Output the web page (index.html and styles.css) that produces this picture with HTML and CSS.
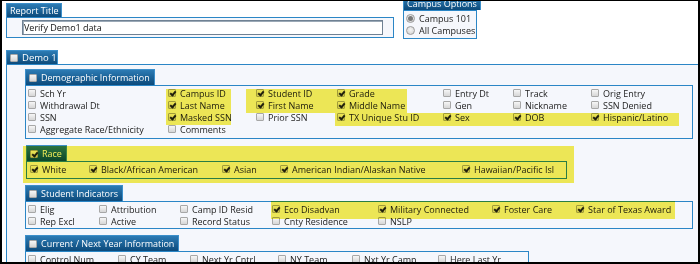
FILE: index.html
```html
<!DOCTYPE html>
<html>
<head>
<meta charset="utf-8">
<link rel="stylesheet" href="styles.css">
</head>
<body>
<div class="frame">
  <div class="top">
    <div class="grp rt">
      <div class="tab">Report Title</div>
      <div class="box rt-box"><input class="title-input" type="text" value="Verify Demo1 data"></div>
    </div>
    <div class="grp co">
      <div class="tab">Campus Options</div>
      <div class="box co-box">
        <label class="opt"><input type="radio" name="camp" checked>Campus 101</label>
        <label class="opt"><input type="radio" name="camp">All Campuses</label>
      </div>
    </div>
  </div>

  <div class="demo">
    <div class="tab demo-tab"><input type="checkbox">Demo 1</div>
    <div class="demo-box">
      <section class="sec demog">
        <div class="tab"><input type="checkbox">Demographic Information</div>
        <div class="box grid g-demog">
          <label><input type="checkbox">Sch Yr</label>
          <label><input type="checkbox" checked>Campus ID</label>
          <label><input type="checkbox" checked>Student ID</label>
          <label><input type="checkbox" checked>Grade</label>
          <label><input type="checkbox">Entry Dt</label>
          <label><input type="checkbox">Track</label>
          <label><input type="checkbox">Orig Entry</label>

          <label><input type="checkbox">Withdrawal Dt</label>
          <label><input type="checkbox" checked>Last Name</label>
          <label><input type="checkbox" checked>First Name</label>
          <label><input type="checkbox" checked>Middle Name</label>
          <label><input type="checkbox">Gen</label>
          <label><input type="checkbox">Nickname</label>
          <label><input type="checkbox">SSN Denied</label>

          <label><input type="checkbox">SSN</label>
          <label><input type="checkbox" checked>Masked SSN</label>
          <label><input type="checkbox">Prior SSN</label>
          <label><input type="checkbox" checked>TX Unique Stu ID</label>
          <label><input type="checkbox" checked>Sex</label>
          <label><input type="checkbox" checked>DOB</label>
          <label><input type="checkbox" checked>Hispanic/Latino</label>

          <label><input type="checkbox">Aggregate Race/Ethnicity</label>
          <label><input type="checkbox">Comments</label>
        </div>
      </section>

      <section class="sec race">
        <div class="tab"><input type="checkbox" checked>Race</div>
        <div class="box grid g-race">
          <label><input type="checkbox" checked>White</label>
          <label><input type="checkbox" checked>Black/African American</label>
          <label><input type="checkbox" checked>Asian</label>
          <label><input type="checkbox" checked>American Indian/Alaskan Native</label>
          <label><input type="checkbox" checked>Hawaiian/Pacific Isl</label>
        </div>
      </section>

      <section class="sec stud">
        <div class="tab"><input type="checkbox">Student Indicators</div>
        <div class="box grid g-stud">
          <label><input type="checkbox">Elig</label>
          <label><input type="checkbox">Attribution</label>
          <label><input type="checkbox">Camp ID Resid</label>
          <label><input type="checkbox" checked>Eco Disadvan</label>
          <label><input type="checkbox" checked>Military Connected</label>
          <label><input type="checkbox" checked>Foster Care</label>
          <label><input type="checkbox" checked>Star of Texas Award</label>

          <label><input type="checkbox">Rep Excl</label>
          <label><input type="checkbox">Active</label>
          <label><input type="checkbox">Record Status</label>
          <label><input type="checkbox">Cnty Residence</label>
          <label><input type="checkbox">NSLP</label>
        </div>
      </section>

      <section class="sec cur">
        <div class="tab"><input type="checkbox">Current / Next Year Information</div>
        <div class="box grid g-cur">
          <label><input type="checkbox">Control Num</label>
          <label><input type="checkbox">CY Team</label>
          <label><input type="checkbox">Next Yr Cntrl</label>
          <label><input type="checkbox">NY Team</label>
          <label><input type="checkbox">Nxt Yr Camp</label>
          <label><input type="checkbox">Here Last Yr</label>
        </div>
      </section>
    </div>
  </div>

  <div class="hl hl-1"></div>
  <div class="hl hl-2"></div>
  <div class="hl hl-3"></div>
  <div class="hl hl-4"></div>
  <div class="hl hl-5"></div>
</div>
</body>
</html>
```
FILE: styles.css
```css
* { box-sizing: border-box; }

html, body {
  margin: 0;
  padding: 0;
  background: #fff;
}

body {
  font-family: "Open Sans", "Liberation Sans", sans-serif;
  font-size: 9px;
  color: #222;
}

.frame {
  position: relative;
  width: 700px;
  height: 264px;
  border: 2px solid #000;
  border-top-width: 1px;
  overflow: hidden;
  isolation: isolate;
  background: #fff;
  display: flex;
  flex-direction: column;
}

/* ---------- generic pieces ---------- */
.tab {
  display: inline-flex;
  align-items: center;
  align-self: flex-start;
  height: 16px;
  padding: 0 4px 0 3px;
  color: #fff;
  white-space: nowrap;
  background: linear-gradient(#2c7bb4, #0c4a7b);
  border: 1px solid #3c8fca;
  border-bottom: none;
}

.box {
  border: 1px solid #2b86c6;
  background: #f5f7fc;
}

label {
  display: flex;
  align-items: center;
  height: 12px;
  white-space: nowrap;
}

input[type="checkbox"] {
  appearance: none;
  -webkit-appearance: none;
  position: relative;
  width: 8px;
  height: 8px;
  margin: 0 4px 0 0;
  flex: none;
  border: 1px solid #a7a7a7;
  border-radius: 1px;
  background: linear-gradient(#f6f6f6, #d6d6d6);
}

input[type="checkbox"]:checked::after {
  content: "";
  position: absolute;
  left: 2px;
  top: 0px;
  width: 2px;
  height: 4px;
  border: solid #222;
  border-width: 0 2px 2px 0;
  transform: rotate(40deg);
}

input[type="radio"] {
  appearance: none;
  -webkit-appearance: none;
  position: relative;
  width: 9px;
  height: 9px;
  margin: 0 4px 0 0;
  flex: none;
  border: 1px solid #9c9c9c;
  border-radius: 50%;
  background: radial-gradient(circle at 50% 40%, #f4f4f4, #cfcfcf);
}

input[type="radio"]:checked::after {
  content: "";
  position: absolute;
  left: 1px;
  top: 1px;
  width: 5px;
  height: 5px;
  border-radius: 50%;
  background: #7a7a7a;
}

/* ---------- top row ---------- */
.top {
  display: flex;
  align-items: flex-start;
  height: 38px;
  flex: none;
}

.grp {
  display: flex;
  flex-direction: column;
}

.rt {
  margin: 2px 0 0 4px;
}

.rt .tab {
  height: 14px;
  padding: 0 2px 0 3px;
}

.rt-box {
  width: 388px;
  height: 21px;
  padding: 2px 0 0 15px;
}

.title-input {
  display: block;
  width: 361px;
  height: 15px;
  margin: 0;
  padding: 0 0 0 1px;
  font: inherit;
  color: #111;
  background: #fff;
  border: 1px solid #6f8193;
  box-shadow: inset 1px 1px 0 #9aa8b6;
  outline: none;
}

.co {
  margin: -5px 0 0 9px;
}

.co .tab {
  height: 14px;
  padding: 0 3px 0 3px;
}

.co-box {
  width: 74px;
  height: 29px;
  padding: 1px 0 0 2px;
}

.opt {
  height: 12px;
}

/* ---------- Demo 1 ---------- */
.demo {
  margin: 11px 0 0 4px;
  display: flex;
  flex-direction: column;
  flex: 1;
  min-height: 0;
}

.demo-tab {
  height: 17px;
  width: 52px;
  padding: 0 0 0 3px;
  font-size: 9.5px;
}

.demo-box {
  flex: 1;
  border: 1px solid #2b86c6;
  border-right: none;
  background: #f5f7fc;
  padding: 4px 0 0 18px;
  display: flex;
  flex-direction: column;
}

.sec {
  display: flex;
  flex-direction: column;
}

.grid {
  display: grid;
  padding: 1px 2px 3px;
}

.g-demog {
  width: 668px;
  grid-template-columns: 140px 88px 81px 106px 70px 78px 1fr;
}

.race {
  margin: 6px 0 0 1px;
}

.g-race {
  width: 541px;
  padding: 1px 3px 3px;
  grid-template-columns: 59px 133px 58px 182px 1fr;
}

.stud {
  margin-top: 6px;
}

.g-stud {
  width: 668px;
  padding: 1px 2px 1px;
  grid-template-columns: 71px 81px 92px 106px 114px 84px 1fr;
}

.cur {
  margin-top: 6px;
}

.g-cur {
  width: 504px;
  padding: 1px 2px 1px;
  grid-template-columns: 90px 72px 88px 74px 86px 1fr;
}

/* ---------- highlighter marks ---------- */
.hl {
  position: absolute;
  z-index: 5;
  background: #f6ee57;
  mix-blend-mode: multiply;
  pointer-events: none;
}

.hl-1 { left: 164px; top: 88px; width: 65px; height: 36px; }
.hl-2 { left: 244px; top: 88px; width: 161px; height: 24px; }
.hl-3 { left: 333px; top: 112px; width: 344px; height: 13px; }
.hl-4 { left: 21px; top: 145px; width: 551px; height: 37px; }
.hl-5 { left: 269px; top: 200px; width: 404px; height: 18px; }
```
